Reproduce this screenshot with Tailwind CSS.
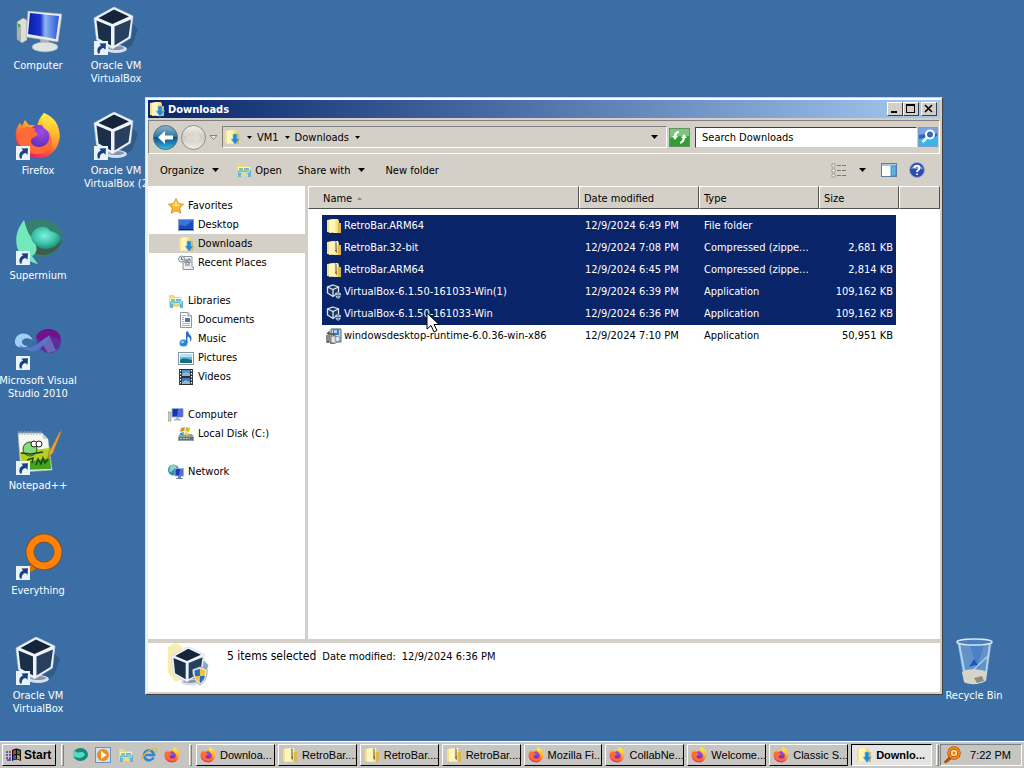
<!DOCTYPE html>
<html lang="en">
<head>
<meta charset="utf-8">
<meta name="viewport" content="width=device-width, initial-scale=1">
<title>Downloads</title>
<script src="https://cdn.jsdelivr.net/npm/@tailwindcss/browser@4"></script>
</head>
<body class="flex h-screen flex-col overflow-hidden bg-[#3a6ea5] font-['DejaVu_Sans_Condensed','DejaVu_Sans',sans-serif] text-[11px] leading-[13px] text-black select-none">

<!-- Shared icon symbols -->
<svg width="0" height="0" class="absolute" aria-hidden="true">
  <defs>
    <linearGradient id="gFox" x1="0.8" y1="0" x2="0.3" y2="1"><stop offset="0" stop-color="#fff04a"/><stop offset=".4" stop-color="#ffa62b"/><stop offset=".75" stop-color="#ff4a3c"/><stop offset="1" stop-color="#e31587"/></linearGradient>
    <linearGradient id="gFoxTail" x1="0" y1="0" x2="0" y2="1"><stop offset="0" stop-color="#fff04a"/><stop offset=".5" stop-color="#ffc02e"/><stop offset="1" stop-color="#ff7a35"/></linearGradient>
    <radialGradient id="gFoxIn" cx=".6" cy=".3" r=".8"><stop offset="0" stop-color="#a04ce6"/><stop offset="1" stop-color="#5a2fb0"/></radialGradient>
    <linearGradient id="gFold" x1="0" y1="0" x2="1" y2="0"><stop offset="0" stop-color="#fff6b5"/><stop offset="1" stop-color="#e5c04e"/></linearGradient>
    <linearGradient id="gScreen" x1="0" y1="0" x2="1" y2="0"><stop offset="0" stop-color="#0a1ea8"/><stop offset=".4" stop-color="#1b35d0"/><stop offset=".55" stop-color="#8fb4f0"/><stop offset="1" stop-color="#2a55d8"/></linearGradient>
    <radialGradient id="gSup" cx=".45" cy=".4" r=".6"><stop offset="0" stop-color="#7ff0dc"/><stop offset=".6" stop-color="#3cc4ac"/><stop offset="1" stop-color="#1f8a74"/></radialGradient>
    <linearGradient id="gBack" x1="0" y1="0" x2="0" y2="1"><stop offset="0" stop-color="#8fb6cf"/><stop offset=".48" stop-color="#2d75a5"/><stop offset=".5" stop-color="#0b4f86"/><stop offset="1" stop-color="#2fc0ea"/></linearGradient>
    <linearGradient id="gFwd" x1="0" y1="0" x2="0" y2="1"><stop offset="0" stop-color="#f2f1ed"/><stop offset=".5" stop-color="#cfcbc2"/><stop offset="1" stop-color="#efeeea"/></linearGradient>

    <symbol id="shortcut" viewBox="0 0 14 14"><rect width="14" height="14" fill="#e8f4fb"/><path d="M4 12.500C2.500 8.500 4 5.500 7 4.800L5.500 2.500L12 2.300L11.500 8.800L9.500 7C7 7.500 5.500 9 5.800 12.500Z" fill="#1d3f80"/></symbol>

    <symbol id="vbox" viewBox="0 0 48 48">
      <path d="M38 14L46 22L40 38L28 46L22 40Z" fill="#24486e" opacity=".5"/>
      <ellipse cx="24" cy="42" rx="11" ry="4" fill="#d6dfea"/><ellipse cx="24" cy="41" rx="8" ry="2" fill="#8295ad"/>
      <path d="M22 0L41 9L38.500 31L20.500 42L4.500 33L2 11Z" fill="#eef3fa" stroke="#c2cfdf" stroke-width=".6"/>
      <path d="M22 2.500L37 9.500L20.500 17L6.500 11Z" fill="#14243a"/>
      <path d="M4.500 13.500L19 19.500V38.500L6.500 31.500Z" fill="#1b3048"/>
      <path d="M39 12.500L22.500 19.500V38.500L36.500 30Z" fill="#27405f"/>
    </symbol>

    <symbol id="firefox" viewBox="0 0 48 48">
      <path d="M30 1C38 5 42 9 44 15C47 22 46 31 41 38C36 44 29 47 22 46C11 45 3 37 2 27C1 20 3 14 6 11L8 14L11 8L15 13C18 13 21 13 23 15C24 9 26 5 30 1Z" fill="url(#gFox)"/>
      <circle cx="25" cy="24" r="11" fill="url(#gFoxIn)"/>
      <path d="M3 21C7 15 15 13 22 17C18 19 23 20 24 22C23 25 18 25 17 28C16 33 22 36 27 35C34 34 37 28 34 20C42 28 37 42 24 42C11 42 3 33 3 21Z" fill="#ff6a35"/>
      <path d="M30 1C38 5 43 9 44 16C47 24 45 33 38 39C40 27 36 20 31 17C26 13 27 6 30 1Z" fill="url(#gFoxTail)"/>
    </symbol>

    <symbol id="folder" viewBox="0 0 16 16"><path d="M1 2L7 1L8 3V15L1 14Z" fill="#f6e184"/><path d="M3 2L8 1V14L3 15Z" fill="#fff6bd"/><path d="M8 1H12L13 3V5H15V15H8Z" fill="url(#gFold)"/><path d="M12 5H15V15H12Z" fill="#dfb84c"/></symbol>
    <symbol id="zip" viewBox="0 0 16 16"><use href="#folder"/><path d="M8 1H12V5H8Z" fill="#f5f0da"/><path d="M9 2H10M10 3H11M9 4H10M10 5H11M9 6H10M10 7H11M9 8H10M10 9H11M9 10H11M9 11H11M10 12H11" stroke="#5c5648" stroke-width="1"/></symbol>
    <symbol id="download" viewBox="0 0 16 16"><use href="#folder"/><path d="M9 5H13V10H15.500L11 15.500L7 10H9Z" fill="#2688cf" stroke="#80c6ee" stroke-width=".7"/></symbol>
    <symbol id="lib" viewBox="0 0 16 16"><path d="M1 2H6L7 4H14V14H1Z" fill="#eadb83"/><path d="M2 5H14V8H2Z" fill="#fbf6ca"/><path d="M3 6H7V8H3Z" fill="#8cc47c"/><path d="M8 6H13V8H8Z" fill="#6db6dc"/><path d="M2 9C6 7 9 10 15 8V15H12V12C10 10 6 10 5 12V15H2Z" fill="#68b5cf"/><path d="M3 10C6 9 9 11 14 9V10C9 12 6 10 3 11Z" fill="#c1e9f2"/></symbol>
    <symbol id="vboxsmall" viewBox="0 0 16 16"><path d="M7 1L12.500 3V8.500L7 12.500L1.500 9V3Z" fill="#17345e" stroke="#dbe6f3" stroke-width="1.300"/><path d="M1.500 3L7 5.500L12.500 3M7 5.500V12" fill="none" stroke="#dbe6f3" stroke-width="1.300"/><path d="M9 9L12 8L15 9.500C15 12.500 14 14 12 15C10 14 9 12 9 9Z" fill="#b6c6d8"/><path d="M12 8V15M9 11.500H15" stroke="#4a6a96" stroke-width="1"/></symbol>
    <symbol id="monitor" viewBox="0 0 16 16"><path d="M0 5H3V14H0Z" fill="#c9cdbf" stroke="#878b80" stroke-width=".6"/><path d="M4 1.500H15V10H4Z" fill="#1632b8" stroke="#9ab0d2" stroke-width="1"/><path d="M10 2L14 2V9H9Z" fill="#506edc"/><path d="M8 10.500H11V12H13V13.500H6V12H8Z" fill="#a8b2b8"/></symbol>
    <symbol id="magOrange" viewBox="0 0 18 18"><path d="M1 16L6 11L8 13L3 17Z" fill="#c34e00" stroke="#7c3500" stroke-width=".5"/><circle cx="11" cy="7" r="5" fill="#ffdca8" stroke="#b54a00" stroke-width="3.500"/><circle cx="11" cy="7" r="5" fill="none" stroke="#ff8a10" stroke-width="2"/><circle cx="11" cy="7" r="1.500" fill="#e77917"/></symbol>
  </defs>
</svg>

<main class="relative min-h-0 flex-1">
  <!-- Desktop icons -->
  <div class="flex gap-[2px] text-center text-white">
    <ul class="w-19">
      <li class="h-[105px]"><button class="flex w-full flex-col items-center gap-[4px] pt-[7px]">
        <svg class="size-12" viewBox="0 0 48 48"><path d="M3 15L9 11L13 13V33L8 36L3 32Z" fill="#dcdfd8" stroke="#8d968f" stroke-width=".6"/><path d="M3 15L7 18V35L3 32Z" fill="#aab1aa"/><rect x="4" y="17" width="2" height="3" fill="#3fae3c"/><path d="M26 31H34L36 39H27Z" fill="#a9b6be"/><ellipse cx="31" cy="40" rx="13" ry="5" fill="#dfe4e2" stroke="#94a0a2" stroke-width=".6"/><path d="M14 4L48 7L44 35L12 30Z" fill="#e9ecea" stroke="#9aa6ac" stroke-width=".6"/><path d="M16 6L45 9L42 32L14 27Z" fill="url(#gScreen)"/></svg>
        <span>Computer</span></button></li>
      <li class="h-[105px]"><button class="flex w-full flex-col items-center gap-[4px] pt-[7px]">
        <span class="relative"><svg class="size-12"><use href="#firefox"/></svg><svg class="absolute bottom-0 left-[2px] size-[14px]"><use href="#shortcut"/></svg></span>
        <span>Firefox</span></button></li>
      <li class="h-[105px]"><button class="flex w-full flex-col items-center gap-[4px] pt-[7px]">
        <span class="relative"><svg class="size-12" viewBox="0 0 48 48"><ellipse cx="26" cy="21" rx="22" ry="19" fill="#35806f"/><path d="M14 29C22 44 45 39 48 22C44 29 30 34 20 27Z" fill="#3f5c4a"/><path d="M10 3C3 12 0 22 4 33C8 40 17 46 24 47L18 39C26 34 22 26 17 20C13 15 12 9 10 3Z" fill="#72e8bc"/><path d="M17 19C20 9 32 7 36 14C41 15 46 17 47 23C41 34 27 34 22 28C19 26 17 23 17 19Z" fill="url(#gSup)"/></svg><svg class="absolute bottom-0 left-[2px] size-[14px]"><use href="#shortcut"/></svg></span>
        <span>Supermium</span></button></li>
      <li class="h-[105px]"><button class="flex w-full flex-col items-center gap-[4px] pt-[7px]">
        <span class="relative"><svg class="size-12" viewBox="0 0 48 48"><path d="M22 15C26 5 42 5 46 14C49 22 44 32 34 31C29 30 26 27 24 24Z" fill="#5c2f9c"/><path d="M22 15C26 4 43 5 46 14L47 20C42 14 34 12 28 20Z" fill="#71128a"/><path d="M29 23L35 13L42 29L34 31Z" fill="#6a69b8"/><path d="M16 14C8 8 0 14 1 21C2 26 9 27 14 24C8 24 6 19 10 17C13 15 17 17 19 18Z" fill="#a3cdf2"/><path d="M5 23C13 28 20 25 26 20C31 16 34 14 36 14L34 19C28 24 24 31 16 29C11 28 7 27 5 23Z" fill="#5478c4"/></svg><svg class="absolute bottom-0 left-[2px] size-[14px]"><use href="#shortcut"/></svg></span>
        <span class="whitespace-nowrap">Microsoft Visual<br>Studio 2010</span></button></li>
      <li class="h-[105px]"><button class="flex w-full flex-col items-center gap-[4px] pt-[7px]">
        <span class="relative"><svg class="size-12" viewBox="0 0 48 48"><path d="M4 6H28L34 12L38 43L7 45Z" fill="#f5f8f2" stroke="#aab7b3" stroke-width=".7"/><path d="M28 6L29 12H34Z" fill="#c6d0cb"/><path d="M6 25L35 21L37 41L8 43Z" fill="#b5ce22"/><path d="M7 36L36 31L37 42L8 43Z" fill="#41a51f"/><path d="M5 4V8M8 4V8M11 4V8M14 4V8M17 4V8M20 4V8M23 4V8M26 4V8" stroke="#a0aab0"/><ellipse cx="16" cy="22" rx="7" ry="7" fill="#8bd77e" stroke="#215820" stroke-width="1"/><circle cx="20" cy="17" r="3" fill="#fff" stroke="#222" stroke-width="1"/><circle cx="25" cy="17" r="3" fill="#fff" stroke="#222" stroke-width="1"/><path d="M7 26L17 27L29 25M13 33L19 31L18 36M22 38L24 32L27 37L29 31L31 36L34 32" fill="none" stroke="#1e4415" stroke-width="1.500"/><path d="M45 6L48 3L39 26L34 31L35 25Z" fill="#e2a43a" stroke="#8e6a2b" stroke-width=".6"/></svg><svg class="absolute bottom-0 left-[2px] size-[14px]"><use href="#shortcut"/></svg></span>
        <span>Notepad++</span></button></li>
      <li class="h-[105px]"><button class="flex w-full flex-col items-center gap-[4px] pt-[7px]">
        <span class="relative"><svg class="size-12" viewBox="0 0 48 48"><path d="M14 36L19 29L25 34L17 40Z" fill="#e56d00"/><circle cx="30" cy="20" r="14" fill="none" stroke="#8a4a18" stroke-width="8.500"/><circle cx="30" cy="20" r="14" fill="none" stroke="#ff8208" stroke-width="7"/></svg><svg class="absolute bottom-0 left-[2px] size-[14px]"><use href="#shortcut"/></svg></span>
        <span>Everything</span></button></li>
      <li class="h-[105px]"><button class="flex w-full flex-col items-center gap-[4px] pt-[7px]">
        <span class="relative"><svg class="size-12"><use href="#vbox"/></svg><svg class="absolute bottom-0 left-[2px] size-[14px]"><use href="#shortcut"/></svg></span>
        <span>Oracle VM<br>VirtualBox</span></button></li>
    </ul>
    <ul class="w-19">
      <li class="h-[105px]"><button class="flex w-full flex-col items-center gap-[4px] pt-[7px]">
        <span class="relative"><svg class="size-12"><use href="#vbox"/></svg><svg class="absolute bottom-0 left-[2px] size-[14px]"><use href="#shortcut"/></svg></span>
        <span>Oracle VM<br>VirtualBox</span></button></li>
      <li class="h-[105px]"><button class="flex w-full flex-col items-center gap-[4px] pt-[7px]">
        <span class="relative"><svg class="size-12"><use href="#vbox"/></svg><svg class="absolute bottom-0 left-[2px] size-[14px]"><use href="#shortcut"/></svg></span>
        <span class="whitespace-nowrap">Oracle VM<br>VirtualBox (2</span></button></li>
    </ul>
  </div>

  <button class="absolute right-[12px] bottom-[39px] flex w-19 flex-col items-center gap-[4px] text-white">
    <svg class="size-12" viewBox="0 0 48 48"><path d="M7 4L42 4L36 44C30 48 18 48 14 45Z" fill="#6fa0d6" opacity=".75"/><path d="M9 6L16 44M40 6L35 44" stroke="#c6e0f5" stroke-width="2" opacity=".8"/><path d="M20 8L34 8L27 30Z" fill="#3a75c8" opacity=".6"/><path d="M19 30L24 22L29 30L25 28Z" fill="#1e56b8"/><path d="M39 18L20 36" stroke="#b0cdea" stroke-width="1.500"/><path d="M12 35C18 31 31 32 37 35L35 44C30 48 18 48 14 45Z" fill="#d6d5c9"/><path d="M24 41L32 39L34 44L27 46Z" fill="#8e8d80"/><ellipse cx="24.500" cy="5" rx="17.500" ry="3" fill="#4c7fb8" stroke="#d4e8f6" stroke-width="1.500"/></svg>
    <span>Recycle Bin</span></button>

  <!-- Explorer window -->
  <section aria-label="Downloads" class="absolute top-[97px] right-[81px] bottom-[46px] left-[145px] flex flex-col border border-t-[#d4d0c8] border-r-[#404040] border-b-[#404040] border-l-[#d4e6f2] bg-[#d4d0c8]">
    <div class="flex min-h-0 flex-1 flex-col border-2 border-t-white border-r-[#d4d0c8] border-b-[#d4d0c8] border-l-[#e8f2f8]">
      <header class="flex h-[18px] shrink-0 items-center bg-linear-to-r from-[#0a246a] to-[#a6caf0] pr-[3px] pl-px text-white">
        <svg class="size-4"><use href="#download"/></svg>
        <h1 class="ml-[3px] flex-1 font-bold">Downloads</h1>
        <div class="flex">
          <button aria-label="Minimize" class="grid h-[14px] w-4 place-items-center border border-t-white border-r-[#404040] border-b-[#404040] border-l-white bg-[#d4d0c8]"><svg class="h-[10px] w-3" viewBox="0 0 12 10"><path d="M2 7H8V9H2Z"/></svg></button>
          <button aria-label="Maximize" class="grid h-[14px] w-4 place-items-center border border-t-white border-r-[#404040] border-b-[#404040] border-l-white bg-[#d4d0c8]"><svg class="h-[10px] w-3" viewBox="0 0 12 10"><path d="M1 0H10V9H1ZM2 2V8H9V2Z" fill-rule="evenodd"/></svg></button>
          <button aria-label="Close" class="ml-[2px] grid h-[14px] w-4 place-items-center border border-t-white border-r-[#404040] border-b-[#404040] border-l-white bg-[#d4d0c8]"><svg class="h-[10px] w-3" viewBox="0 0 12 10"><path d="M2 1L9 8M9 1L2 8" stroke="#000" stroke-width="1.600"/></svg></button>
        </div>
      </header>

      <!-- Navigation row -->
      <div class="mt-[2px] flex h-[34px] shrink-0 items-center border border-t-[#808080] border-r-white border-b-white border-l-[#808080] pr-[1px] pl-1">
        <div class="flex items-center gap-[3px]">
          <button aria-label="Back"><svg class="size-[25px]" viewBox="0 0 25 25"><circle cx="12.500" cy="12.500" r="12" fill="url(#gBack)" stroke="#5b6f7c"/><path d="M5 12.500L12 6V10.500H20V14.500H12V19Z" fill="#fff"/></svg></button>
          <button aria-label="Forward"><svg class="size-[25px]" viewBox="0 0 25 25"><circle cx="12.500" cy="12.500" r="12" fill="url(#gFwd)" stroke="#8f8c84"/><path d="M20 12.500L13 7V10.500H6V14.500H13V18Z" fill="#dedbd4"/></svg></button>
          <button aria-label="Recent pages"><svg class="size-[9px]" viewBox="0 0 9 9"><path d="M1 2.500H8L4.500 6.500Z" fill="#eee" stroke="#85827b"/></svg></button>
        </div>
        <div class="ml-1 flex h-[22px] flex-1 items-center border border-t-[#808080] border-r-white border-b-white border-l-[#808080] pl-[1px]">
          <svg class="size-4"><use href="#download"/></svg>
          <svg class="ml-[7px] h-[3px] w-[5px]" viewBox="0 0 5 3"><path d="M0 0H5L2.500 3Z"/></svg>
          <a href="#" class="ml-[5px]">VM1</a>
          <svg class="ml-[6px] h-[3px] w-[5px]" viewBox="0 0 5 3"><path d="M0 0H5L2.500 3Z"/></svg>
          <a href="#" class="ml-[5px]">Downloads</a>
          <svg class="ml-[6px] h-[3px] w-[5px]" viewBox="0 0 5 3"><path d="M0 0H5L2.500 3Z"/></svg>
          <button aria-label="Previous locations" class="mr-[8px] ml-auto"><svg class="h-1 w-[7px]" viewBox="0 0 7 4"><path d="M0 0H7L3.500 4Z"/></svg></button>
        </div>
        <button aria-label="Refresh" class="ml-[2px]"><svg class="h-[19px] w-[21px]" viewBox="0 0 21 19"><rect x=".5" y=".5" width="20" height="18" fill="#2f9e33" stroke="#6d8f68"/><path d="M1 1H20V8C12 9 8 7 1 10Z" fill="#7cc77b"/><path d="M3 8L6 12L9 8H7.500C7.500 6 8.500 5 10 5V3C7 3 5 5 5 8ZM18 10L15 6L12 10H13.500C13.500 12 12.500 13 11 14V16C14 15 16 13 16 10Z" fill="#fff"/></svg></button>
        <input type="text" aria-label="Search Downloads" placeholder="Search Downloads" class="ml-[5px] h-[21px] w-[222px] border border-t-[#404040] border-r-white border-b-[#d4d0c8] border-l-[#404040] bg-white px-[6px] placeholder:text-black">
        <button aria-label="Search" class="ml-[1px]"><svg class="h-[20px] w-[20px]" viewBox="0 0 20 20"><rect x=".5" y=".5" width="19" height="19" fill="#2a66c8" stroke="#7c9cc4"/><path d="M1 12C8 10 13 12 19 9V19H1Z" fill="#39b6e8"/><path d="M1 1H19V6C12 9 7 6 1 8Z" fill="#7ba4de"/><circle cx="12" cy="7.500" r="4" fill="#3766bb" stroke="#fff" stroke-width="2"/><path d="M9 10.500L4.500 15" stroke="#fff" stroke-width="2.500"/></svg></button>
      </div>

      <!-- Command bar -->
      <div class="flex h-8 shrink-0 items-center pr-[15px] pl-3">
        <button class="flex items-center gap-2">Organize<svg class="h-1 w-[7px]" viewBox="0 0 7 4"><path d="M0 0H7L3.500 4Z"/></svg></button>
        <button class="ml-[17px] flex items-center gap-[3px]"><svg class="size-4"><use href="#lib"/></svg>Open</button>
        <button class="ml-4 flex items-center gap-2">Share with<svg class="h-1 w-[7px]" viewBox="0 0 7 4"><path d="M0 0H7L3.500 4Z"/></svg></button>
        <button class="ml-5">New folder</button>
        <button aria-label="Change your view" class="ml-auto flex items-center gap-3"><svg class="size-4" viewBox="0 0 16 16"><path d="M1 2H4V5H1ZM1 7H4V10H1ZM1 12H4V15H1Z" fill="#f8f8f5" stroke="#8b8a83" stroke-width=".8"/><path d="M6 3.500H10M11 3.500H15M6 8.500H10M11 8.500H15M6 13.500H10M11 13.500H15" stroke="#77766f"/></svg><svg class="h-1 w-[7px]" viewBox="0 0 7 4"><path d="M0 0H7L3.500 4Z"/></svg></button>
        <button aria-label="Preview pane" class="ml-[15px]"><svg class="size-4" viewBox="0 0 16 16"><rect x=".5" y="1.500" width="15" height="13" fill="#fff" stroke="#5d7f9f"/><path d="M1 2H15V4H1Z" fill="#a9c7df"/><path d="M10 4H15V14H10Z" fill="#5eb4e2" stroke="#3a83b4" stroke-width=".8"/></svg></button>
        <button aria-label="Get help" class="ml-3"><svg class="size-4" viewBox="0 0 16 16"><circle cx="8" cy="8" r="7.500" fill="#2b4bb0" stroke="#9aa9d0"/><path d="M2 7C3 2 13 2 14 7C10 8 6 6 2 7Z" fill="#7f96d8"/><path d="M5.500 6C5.500 3 10.500 3 10.500 6C10.500 8 8 8 8 10M8 11.500V13" fill="none" stroke="#fff" stroke-width="1.800"/></svg></button>
      </div>

      <div class="flex min-h-0 flex-1 border-b-4 border-[#d4d0c8] bg-white">
        <!-- Navigation pane -->
        <nav class="flex w-[160px] shrink-0 flex-col gap-[19px] border-r-[3px] border-[#d4d0c8] pt-[10px] leading-[19px]">
          <ul>
            <li><a href="#" class="flex items-center gap-1 pl-5"><svg class="size-4" viewBox="0 0 16 16"><path d="M8 .5L10.300 5.500L15.500 6.200L11.800 10L12.800 15.300L8 12.800L3.200 15.300L4.200 10L.5 6.200L5.700 5.500Z" fill="#f9b52f" stroke="#dd8a1d" stroke-width=".8"/><path d="M8 2L9.500 6.500L13 7L8 9L4 7L6.500 6.500Z" fill="#ffe374"/></svg>Favorites</a></li>
            <li><a href="#" class="flex items-center gap-1 pl-[30px]"><svg class="size-4" viewBox="0 0 16 16"><rect x=".5" y="2.500" width="15" height="11" fill="#1e49b8" stroke="#8aa0c0"/><path d="M1 3H15L8 9L1 8Z" fill="#3b74d8"/><path d="M1 12H15V13H1Z" fill="#16265c"/></svg>Desktop</a></li>
            <li class="ml-px"><a href="#" aria-current="page" class="flex items-center gap-1 bg-[#d4d0c8] pl-[29px]"><svg class="size-4"><use href="#download"/></svg>Downloads</a></li>
            <li><a href="#" class="flex items-center gap-1 pl-[30px]"><svg class="size-4" viewBox="0 0 16 16"><path d="M4 1.500H14V12H15.500V14.500H5V4H2Z" fill="#eef0f2" stroke="#8d949c"/><circle cx="3.500" cy="4" r="3" fill="#e3e8ed" stroke="#8b96a3"/><path d="M3.500 2V4.500H5M7 5H9V8H7ZM10 4H12V8H10ZM7 10H12" fill="none" stroke="#667280"/></svg>Recent Places</a></li>
          </ul>
          <ul>
            <li><a href="#" class="flex items-center gap-1 pl-5"><svg class="size-4"><use href="#lib"/></svg>Libraries</a></li>
            <li><a href="#" class="flex items-center gap-1 pl-[30px]"><svg class="size-4" viewBox="0 0 16 16"><path d="M2.500 .5H10L13.500 4V15.500H2.500Z" fill="#fbfcfd" stroke="#8a97a4"/><path d="M10 .5V4H13.500" fill="#dce3e9" stroke="#8a97a4"/><path d="M4 3.500H8M4 5.500H6M4 11.500H12M4 13.500H12" stroke="#a9b4c0"/><path d="M7 6H12V10H7Z" fill="#4a789e"/><path d="M4 7.500H6M4 9.500H6" stroke="#a9b4c0"/></svg>Documents</a></li>
            <li><a href="#" class="flex items-center gap-1 pl-[30px]"><svg class="size-4" viewBox="0 0 16 16"><ellipse cx="5.500" cy="12" rx="4" ry="3.500" fill="#2f86dc"/><ellipse cx="4.500" cy="11" rx="1.800" ry="1.300" fill="#8dc7f7"/><path d="M8 1L10 0C10 3 14 4 13.500 8C13.500 9 13 10 12 11C13 7 11 6 9.500 5.500V12H8Z" fill="#2a70c8"/></svg>Music</a></li>
            <li><a href="#" class="flex items-center gap-1 pl-[30px]"><svg class="size-4" viewBox="0 0 16 16"><rect x=".5" y="2.500" width="15" height="12" fill="#f7fafc" stroke="#8594a4"/><path d="M2 4H14V13H2Z" fill="#61bde0"/><path d="M2 4H14V7H2Z" fill="#b8e2f2"/><path d="M2 10C6 7 10 9 14 10V13H2Z" fill="#1c6c7e"/></svg>Pictures</a></li>
            <li><a href="#" class="flex items-center gap-1 pl-[30px]"><svg class="size-4" viewBox="0 0 16 16"><rect x="1" y="0" width="14" height="16" fill="#2a2f38"/><path d="M4 1H12V7H4Z" fill="#4f96d0"/><path d="M4 9H12V15H4Z" fill="#3f7ab4"/><path d="M4 5L8 3L12 5V7H4ZM4 13L8 11L12 13V15H4Z" fill="#8fb7cd"/><path d="M2.500 1V16M13.500 1V16" stroke="#fff" stroke-width="1.200" stroke-dasharray="1.500 1.500"/></svg>Videos</a></li>
          </ul>
          <ul>
            <li><a href="#" class="flex items-center gap-1 pl-5"><svg class="size-4"><use href="#monitor"/></svg>Computer</a></li>
            <li><a href="#" class="flex items-center gap-1 pl-[30px]"><svg class="size-4" viewBox="0 0 16 16"><path d="M2 8H14L16 11V15H0V11Z" fill="#93a3a4"/><path d="M1 11H15V14H1Z" fill="#5d7480"/><path d="M2 12.500H12" stroke="#b8c6c4" stroke-dasharray="2 1"/><path d="M3 2L7 1L6 5L2 6Z" fill="#e08a2c"/><path d="M8 1L12 2L11 6L7 5Z" fill="#c7c72c"/><path d="M2 7L6 6L5 9L2 9Z" fill="#4a8ed0"/><path d="M7 6L11 7L11 9H6Z" fill="#ecd63a"/></svg>Local Disk (C:)</a></li>
          </ul>
          <ul>
            <li><a href="#" class="flex items-center gap-1 pl-5"><svg class="size-4" viewBox="0 0 16 16"><circle cx="5.500" cy="6" r="5.500" fill="#2f8fb0"/><path d="M2 3C4 0 8 1 9 3L6 5L3 8L1 7Z" fill="#8fd8c0"/><path d="M7 4.500H15.500V12H7Z" fill="#1a38c0" stroke="#9db0cf"/><path d="M12 5H15V11H11Z" fill="#5070dd"/><path d="M10 12H13V14H15V15H8V14H10Z" fill="#6e84a8"/></svg>Network</a></li>
          </ul>
        </nav>

        <!-- File list -->
        <div class="min-w-0 flex-1">
          <table class="w-full table-fixed border-separate border-spacing-0 text-left">
            <colgroup><col class="w-[271px]"><col class="w-[120px]"><col class="w-[120px]"><col class="w-[80px]"><col></colgroup>
            <thead>
              <tr class="h-[23px] bg-[#d4d0c8]">
                <th class="border border-t-white border-r-[#505050] border-b-[#505050] border-l-white pt-px pl-[14px] font-normal" scope="col"><span class="flex items-center gap-[5px]">Name<svg class="h-[3px] w-[5px]" viewBox="0 0 5 3"><path d="M0 3H5L2.500 0Z" fill="#949088"/></svg></span></th>
                <th class="border border-t-white border-r-[#505050] border-b-[#505050] border-l-white pt-px pl-1 font-normal" scope="col">Date modified</th>
                <th class="border border-t-white border-r-[#505050] border-b-[#505050] border-l-white pt-px pl-1 font-normal" scope="col">Type</th>
                <th class="border border-t-white border-r-[#505050] border-b-[#505050] border-l-white pt-px pl-1 font-normal" scope="col">Size</th>
                <td class="border border-t-white border-r-[#505050] border-b-[#505050] border-l-white"></td>
              </tr>
            </thead>
            <tbody class="leading-[22px] whitespace-nowrap before:block before:h-[6px]">
              <tr class="text-white">
                <td class="p-0 pl-[14px]"><div class="flex items-center gap-[2px] bg-[#0a246a] pl-1"><svg class="size-4"><use href="#folder"/></svg>RetroBar.ARM64</div></td>
                <td class="bg-[#0a246a] p-0 pl-[6px]">12/9/2024 6:49 PM</td><td class="bg-[#0a246a] p-0 pl-[5px]">File folder</td>
                <td class="p-0 pr-[3px]"><div class="h-[22px] bg-[#0a246a] pr-[3px] text-right"></div></td><td></td>
              </tr>
              <tr class="text-white">
                <td class="p-0 pl-[14px]"><div class="flex items-center gap-[2px] bg-[#0a246a] pl-1"><svg class="size-4"><use href="#zip"/></svg>RetroBar.32-bit</div></td>
                <td class="bg-[#0a246a] p-0 pl-[6px]">12/9/2024 7:08 PM</td><td class="bg-[#0a246a] p-0 pl-[5px]">Compressed (zippe...</td>
                <td class="p-0 pr-[3px]"><div class="bg-[#0a246a] pr-[3px] text-right">2,681 KB</div></td><td></td>
              </tr>
              <tr class="text-white">
                <td class="p-0 pl-[14px]"><div class="flex items-center gap-[2px] bg-[#0a246a] pl-1"><svg class="size-4"><use href="#zip"/></svg>RetroBar.ARM64</div></td>
                <td class="bg-[#0a246a] p-0 pl-[6px]">12/9/2024 6:45 PM</td><td class="bg-[#0a246a] p-0 pl-[5px]">Compressed (zippe...</td>
                <td class="p-0 pr-[3px]"><div class="bg-[#0a246a] pr-[3px] text-right">2,814 KB</div></td><td></td>
              </tr>
              <tr class="text-white">
                <td class="p-0 pl-[14px]"><div class="flex items-center gap-[2px] bg-[#0a246a] pl-1"><svg class="size-4"><use href="#vboxsmall"/></svg>VirtualBox-6.1.50-161033-Win(1)</div></td>
                <td class="bg-[#0a246a] p-0 pl-[6px]">12/9/2024 6:39 PM</td><td class="bg-[#0a246a] p-0 pl-[5px]">Application</td>
                <td class="p-0 pr-[3px]"><div class="bg-[#0a246a] pr-[3px] text-right">109,162 KB</div></td><td></td>
              </tr>
              <tr class="text-white">
                <td class="p-0 pl-[14px]"><div class="flex items-center gap-[2px] bg-[#0a246a] pl-1"><svg class="size-4"><use href="#vboxsmall"/></svg>VirtualBox-6.1.50-161033-Win</div></td>
                <td class="bg-[#0a246a] p-0 pl-[6px]">12/9/2024 6:36 PM</td><td class="bg-[#0a246a] p-0 pl-[5px]">Application</td>
                <td class="p-0 pr-[3px]"><div class="bg-[#0a246a] pr-[3px] text-right">109,162 KB</div></td><td></td>
              </tr>
              <tr>
                <td class="p-0 pl-[14px]"><div class="flex items-center gap-[2px] pl-1"><svg class="size-4" viewBox="0 0 16 16"><path d="M5 1H15V14H5Z" fill="#c8d3dc" stroke="#4f6275"/><path d="M7 1H13V7H7Z" fill="#3f7fb8"/><path d="M8 2H11V5H8Z" fill="#a9d0ea"/><path d="M1 6L3 4V14H1V7M3 6H8V15H4" fill="none" stroke="#4d4d4a" stroke-width="1.300"/><path d="M5 8H10V15H5Z" fill="#e4e6e4" stroke="#63666a" stroke-width=".8"/><circle cx="11.500" cy="11" r="2.500" fill="#dfe9f0" stroke="#6d8294" stroke-width=".8"/></svg>windowsdesktop-runtime-6.0.36-win-x86</div></td>
                <td class="p-0 pl-[6px]">12/9/2024 7:10 PM</td><td class="p-0 pl-[5px]">Application</td>
                <td class="p-0 pr-[3px]"><div class="pr-[3px] text-right">50,951 KB</div></td><td></td>
              </tr>
            </tbody>
          </table>
        </div>
      </div>

      <!-- Details pane -->
      <footer class="flex h-[49px] shrink-0 items-start bg-white pl-[18px]">
        <svg class="size-11" viewBox="0 0 48 48"><path d="M2 4L10 0L18 4V40L10 42L2 32Z" fill="#f6eeb0"/><g transform="translate(4 4) scale(.92)"><use href="#vbox" width="48" height="48"/></g><path d="M29 29L37 26L45 29C45 38 42 43 37 46C32 43 29 38 29 29Z" fill="#e9edf2" stroke="#8a8f98" stroke-width=".8"/><path d="M31 30L37 28V36H31.500Z" fill="#2f68c0"/><path d="M37 28L43 30L42.500 36H37Z" fill="#f0c62f"/><path d="M31.500 36H37V44C34 42 32 39 31.500 36Z" fill="#f0c62f"/><path d="M37 36H42.500C42 39 40 42 37 44Z" fill="#2f68c0"/></svg>
        <p class="mt-[7px] ml-[17px] flex items-baseline gap-[6px]"><span class="text-[12px]">5 items selected</span><span>Date modified:</span><span>12/9/2024 6:36 PM</span></p>
      </footer>
    </div>
  </section>

  <!-- Mouse pointer -->
  <svg class="absolute top-[312px] left-[426px] h-[21px] w-[14px]" viewBox="0 0 14 21"><path d="M1 1V17L5 13.500L8 20L11 18.500L8 12.500H13Z" fill="#fff" stroke="#000"/></svg>
</main>

<!-- Taskbar -->
<footer class="flex h-[27px] shrink-0 items-center border-t border-white bg-[#c6c5c2] pr-[2px] pl-[2px] font-['Liberation_Sans',sans-serif]">
  <button class="flex h-[22px] w-[54px] shrink-0 items-center gap-[2px] border border-t-white border-r-black border-b-black border-l-white pl-[3px] text-[12px] font-bold"><svg class="size-4" viewBox="0 0 16 16"><path d="M6 3C9 1 12 1 15 3V14C12 12 9 12 6 14Z" fill="#111"/><path d="M7 4C8 3 9 3 10 3V7C9 7 8 7 7 8Z" fill="#c0402e"/><path d="M11 3C12 3 13 3 14 4V8C13 7 12 7 11 7Z" fill="#417a36"/><path d="M7 9C8 8 9 8 10 8V12C9 12 8 12 7 13Z" fill="#3b54d6"/><path d="M11 8C12 8 13 8 14 9V13C13 12 12 12 11 12Z" fill="#b89e2c"/><path d="M0 5H2M3 5H5M0 8H2M3 8H5M0 11H2M3 11H5M1 13H5" stroke="#5a2f9a" stroke-width="1.500"/></svg>Start</button>
  <span class="ml-[5px] h-[22px] w-[3px] border border-t-white border-r-[#808080] border-b-[#808080] border-l-white"></span>
  <div class="ml-[8px] flex shrink-0 gap-[7px]">
    <button aria-label="Supermium"><svg class="size-4" viewBox="0 0 16 16"><ellipse cx="8.500" cy="7.500" rx="7.500" ry="6.500" fill="#178a78"/><path d="M1 2C3 5 5 6 9 5C12 5 14 7 12 9C9 12 4 11 1 9Z" fill="#4fdcc4"/></svg></button>
    <button aria-label="Media Player"><svg class="size-4" viewBox="0 0 16 16"><rect x=".5" y=".5" width="15" height="15" fill="#cfe0ee" stroke="#6a93bd"/><circle cx="8" cy="8" r="6" fill="#f08c1e"/><path d="M6 4L11.500 8L6 12Z" fill="#fff"/></svg></button>
    <button aria-label="Explorer"><svg class="size-4"><use href="#lib"/></svg></button>
    <button aria-label="Internet Explorer"><svg class="size-4" viewBox="0 0 16 16"><path d="M12.500 10.500A5 5 0 1 1 13 8H4" fill="none" stroke="#2f86d4" stroke-width="2.600"/><path d="M1 14C-1 10 10 0 15 2C16 3 15 5 14 6" fill="none" stroke="#e6b93a" stroke-width="1.300"/></svg></button>
    <button aria-label="Firefox"><svg class="size-4"><use href="#firefox"/></svg></button>
  </div>
  <span class="ml-[9px] h-[22px] w-[3px] border border-t-white border-r-[#808080] border-b-[#808080] border-l-white"></span>
  <div class="ml-[4px] flex min-w-0 flex-1 gap-[3px] text-[11px]">
    <button class="flex h-[22px] min-w-0 flex-1 items-center gap-1 border border-t-white border-r-black border-b-black border-l-white px-[3px]"><svg class="size-4 shrink-0"><use href="#firefox"/></svg><span class="whitespace-nowrap">Downloa...</span></button>
    <button class="flex h-[22px] min-w-0 flex-1 items-center gap-1 border border-t-white border-r-black border-b-black border-l-white px-[3px]"><svg class="size-4 shrink-0"><use href="#zip"/></svg><span class="whitespace-nowrap">RetroBar....</span></button>
    <button class="flex h-[22px] min-w-0 flex-1 items-center gap-1 border border-t-white border-r-black border-b-black border-l-white px-[3px]"><svg class="size-4 shrink-0"><use href="#zip"/></svg><span class="whitespace-nowrap">RetroBar....</span></button>
    <button class="flex h-[22px] min-w-0 flex-1 items-center gap-1 border border-t-white border-r-black border-b-black border-l-white px-[3px]"><svg class="size-4 shrink-0"><use href="#zip"/></svg><span class="whitespace-nowrap">RetroBar....</span></button>
    <button class="flex h-[22px] min-w-0 flex-1 items-center gap-1 border border-t-white border-r-black border-b-black border-l-white px-[3px]"><svg class="size-4 shrink-0"><use href="#firefox"/></svg><span class="whitespace-nowrap">Mozilla Fi...</span></button>
    <button class="flex h-[22px] min-w-0 flex-1 items-center gap-1 border border-t-white border-r-black border-b-black border-l-white px-[3px]"><svg class="size-4 shrink-0"><use href="#firefox"/></svg><span class="whitespace-nowrap">CollabNe...</span></button>
    <button class="flex h-[22px] min-w-0 flex-1 items-center gap-1 border border-t-white border-r-black border-b-black border-l-white px-[3px]"><svg class="size-4 shrink-0"><use href="#firefox"/></svg><span class="whitespace-nowrap">Welcome...</span></button>
    <button class="flex h-[22px] min-w-0 flex-1 items-center gap-1 border border-t-white border-r-black border-b-black border-l-white px-[3px]"><svg class="size-4 shrink-0"><use href="#firefox"/></svg><span class="whitespace-nowrap">Classic S...</span></button>
    <button aria-pressed="true" class="flex h-[22px] min-w-0 flex-1 items-center gap-1 border border-t-black border-r-white border-b-white border-l-black bg-[#e4e4e2] px-1 font-bold"><svg class="size-4 shrink-0"><use href="#download"/></svg><span class="whitespace-nowrap">Downlo...</span></button>
  </div>
  <span class="ml-[4px] h-[22px] w-[3px] border border-t-white border-r-[#808080] border-b-[#808080] border-l-white"></span>
  <div class="ml-[1px] flex h-[22px] w-[82px] shrink-0 items-center justify-between border border-t-[#808080] border-r-white border-b-white border-l-[#808080] pr-[10px] pl-[2px] text-[11px]">
    <svg class="size-[18px]"><use href="#magOrange"/></svg><time datetime="19:22">7:22 PM</time>
  </div>
</footer>
</body>
</html>
